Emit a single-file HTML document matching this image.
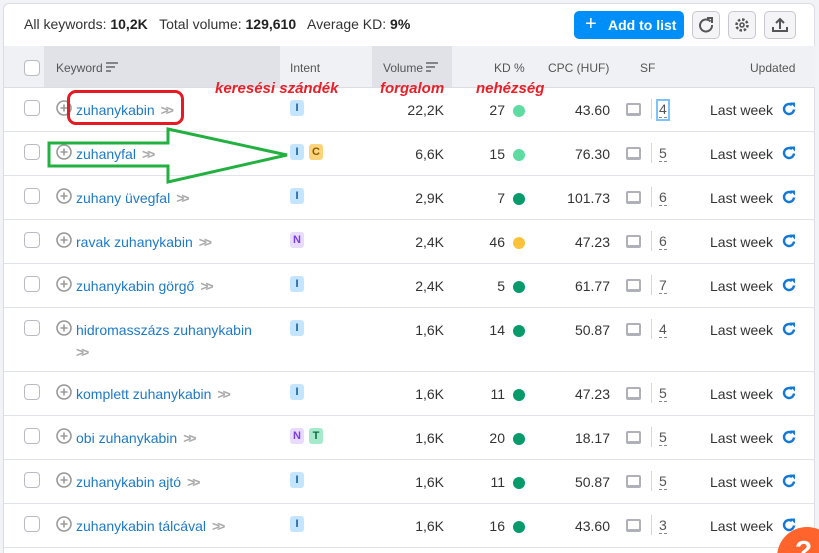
<!DOCTYPE html>
<html><head><meta charset="utf-8"><style>
*{box-sizing:border-box;margin:0;padding:0}
html{width:819px;height:553px;overflow:hidden}
body{width:819px;height:553px;background:#f2f3f6;font-family:"Liberation Sans",sans-serif;position:relative;overflow:hidden;color:#333}
.card{position:absolute;left:3px;top:3px;width:812px;height:550px;background:#fff;border:1px solid #dcdde3;border-bottom:none;border-radius:6px 6px 0 0}
.top{position:absolute;left:24px;top:16px;font-size:14px;color:#333}
.top b{color:#222}
.btn{position:absolute;top:11px;height:28px;border:1px solid #c8c9d0;border-radius:5px;background:#f4f4f6}
.add{position:absolute;left:574px;top:11px;width:110px;height:28px;background:#008ff8;border-radius:5px;color:#fff;font-weight:bold;font-size:14px;line-height:28px;padding-left:34px}
.add:before{content:"+";position:absolute;left:11px;top:-1px;font-size:20px;font-weight:normal}
.hdr{position:absolute;left:4px;top:46px;width:811px;height:42px;background:#f0f1f4;border-bottom:1px solid #dcdde3;font-size:12px;color:#555}
.hdr span{position:absolute;top:15px}
.row{position:absolute;left:4px;width:811px;border-bottom:1px solid #e2e3e8;font-size:14px}
.row>*{position:absolute;top:14px}
.cb{left:20px;top:12px!important;width:16px;height:16px;border:1px solid #b9bac2;border-radius:4px;background:#fff}
.pl{left:52px;top:12px!important}
.kw{left:72px;color:#1d7ac8;white-space:nowrap}
.kw i{font-style:normal;color:#aaa;letter-spacing:-3px;margin-left:6px;font-weight:bold}
.bd{top:12px!important;width:14px;height:16px;border-radius:3px;font-size:11px;font-weight:bold;line-height:16px;text-align:center}
.I{background:#c4e5fe;color:#1a5c9c}.C{background:#fdd47c;color:#8a5a00}.N{background:#e9dbfe;color:#7a3de0}.T{background:#a5ebcb;color:#116b45}
.vol{right:371px;color:#333}
.kd{right:310px}
.dot{left:509px;top:17px!important;width:12px;height:12px;border-radius:50%}
.cpc{right:205px}
.sfi{left:622px;top:15px!important;width:15px;height:13px;border:2px solid #b0b1b8;border-radius:2px;border-bottom-width:3px}
.sep{left:647px;top:11px!important;width:1px;height:20px;background:#d5d6db}
.sfn{left:655px;color:#555;border-bottom:1px dashed #888;line-height:15px}
.lw{left:706px;color:#333}
.rf{left:777px;top:13px!important}
.ann{position:absolute;color:#e8202a;font-weight:bold;font-style:italic;font-size:15px}
</style></head><body>
<div class="card"></div>
<div class="top">All keywords: <b>10,2K</b> &nbsp; Total volume: <b>129,610</b> &nbsp; Average KD: <b>9%</b></div>
<div class="add">Add to list</div>
<div class="btn" style="left:692px;width:28px"><svg width="26" height="26" viewBox="0 0 26 26"><path d="M17.5 9.5A6 6 0 1 0 19 13" fill="none" stroke="#555" stroke-width="2"/><path d="M14 6h5v5" fill="none" stroke="#555" stroke-width="2"/></svg></div>
<div class="btn" style="left:728px;width:28px"><svg width="26" height="26" viewBox="0 0 26 26"><circle cx="13" cy="13" r="5.5" fill="none" stroke="#555" stroke-width="2.5" stroke-dasharray="2.5 1.8"/><circle cx="13" cy="13" r="2" fill="none" stroke="#555" stroke-width="1.6"/></svg></div>
<div class="btn" style="left:764px;width:32px"><svg width="30" height="26" viewBox="0 0 30 26"><path d="M15 17V7M11 11l4-4 4 4M8 15v4h14v-4" fill="none" stroke="#555" stroke-width="2"/></svg></div>
<div class="hdr">
<div style="position:absolute;left:40px;top:0;width:236px;height:41px;background:#e1e2e8"></div>
<div style="position:absolute;left:368px;top:0;width:80px;height:41px;background:#e1e2e8"></div>
<div style="position:absolute;left:20px;top:14px;width:16px;height:16px;border:1px solid #b9bac2;border-radius:4px;background:#fff"></div>
<span style="left:52px">Keyword <svg width="12" height="10" viewBox="0 0 12 10"><path d="M0 1h12M0 5h9M0 9h5" stroke="#666" stroke-width="1.6"/></svg></span>
<span style="left:286px">Intent</span>
<span style="left:379px">Volume <svg width="12" height="10" viewBox="0 0 12 10"><path d="M0 1h12M0 5h9M0 9h5" stroke="#666" stroke-width="1.6"/></svg></span>
<span style="left:490px">KD %</span>
<span style="left:544px">CPC (HUF)</span>
<span style="left:636px">SF</span>
<span style="left:746px">Updated</span>
</div>
<div id="rows"></div>
<script>
var R=[["zuhanykabin",["I"],"22,2K","27","#5ddba0","43.60","4"],["zuhanyfal",["I","C"],"6,6K","15","#5ddba0","76.30","5"],["zuhany üvegfal",["I"],"2,9K","7","#079b6b","101.73","6"],["ravak zuhanykabin",["N"],"2,4K","46","#fdc23c","47.23","6"],["zuhanykabin görgő",["I"],"2,4K","5","#079b6b","61.77","7"],["hidromasszázs zuhanykabin",["I"],"1,6K","14","#079b6b","50.87","4"],["komplett zuhanykabin",["I"],"1,6K","11","#079b6b","47.23","5"],["obi zuhanykabin",["N","T"],"1,6K","20","#079b6b","18.17","5"],["zuhanykabin ajtó",["I"],"1,6K","11","#079b6b","50.87","5"],["zuhanykabin tálcával",["I"],"1,6K","16","#079b6b","43.60","3"]];
var y=88,h="";R.forEach(function(r,i){var H=i==5?64:44;var kw=i==5?'<div class="kw">hidromasszázs zuhanykabin<br><i style="margin-left:0;line-height:28px">&gt;&gt;</i></div>':'<div class="kw">'+r[0]+'<i>&gt;&gt;</i></div>';var b="";r[1].forEach(function(t,j){b+='<div class="bd '+t+'" style="left:'+(286+j*19)+'px">'+t+'</div>'});
h+='<div class="row" style="top:'+y+'px;height:'+H+'px"><div class="cb"></div><svg class="pl" width="16" height="16" viewBox="0 0 16 16"><circle cx="8" cy="8" r="7" fill="none" stroke="#999" stroke-width="1.6"/><path d="M8 4.5v7M4.5 8h7" stroke="#999" stroke-width="1.6"/></svg>'+kw+b+'<div class="vol">'+r[2]+'</div><div class="kd">'+r[3]+'</div><div class="dot" style="background:'+r[4]+'"></div><div class="cpc">'+r[5]+'</div><div class="sfi"></div><div class="sep"></div><div class="sfn"'+(i==0?' style="outline:2px solid #7cc4f8;outline-offset:1px"':'')+'>'+r[6]+'</div><div class="lw">Last week</div><svg class="rf" width="16" height="16" viewBox="0 0 16 16"><path d="M13 8.5A5 5 0 1 1 11 4" fill="none" stroke="#1479d4" stroke-width="2.4"/><path d="M9 1.5h5v5z" fill="#1479d4"/></svg></div>';y+=H;});
document.getElementById("rows").innerHTML=h;
</script>
<div class="ann" style="left:215px;top:80px">keresési szándék</div>
<div class="ann" style="left:380px;top:80px">forgalom</div>
<div class="ann" style="left:476px;top:80px">nehézség</div>
<div style="position:absolute;left:67px;top:90px;width:117px;height:35px;border:3px solid #e51a23;border-radius:9px"></div>
<svg style="position:absolute;left:0;top:0" width="819" height="553"><polygon points="49,143 168,143 168,129 287,155 168,182 168,166 49,166" fill="none" stroke="#22b040" stroke-width="3"/></svg>
<div style="position:absolute;left:777px;top:527px;width:42px;height:26px;overflow:hidden"><div style="width:60px;height:60px;border-radius:50%;background:#ff642d;color:#fff;font-weight:bold;font-size:28px;padding:8px 0 0 18px">?</div></div>
</body></html>
